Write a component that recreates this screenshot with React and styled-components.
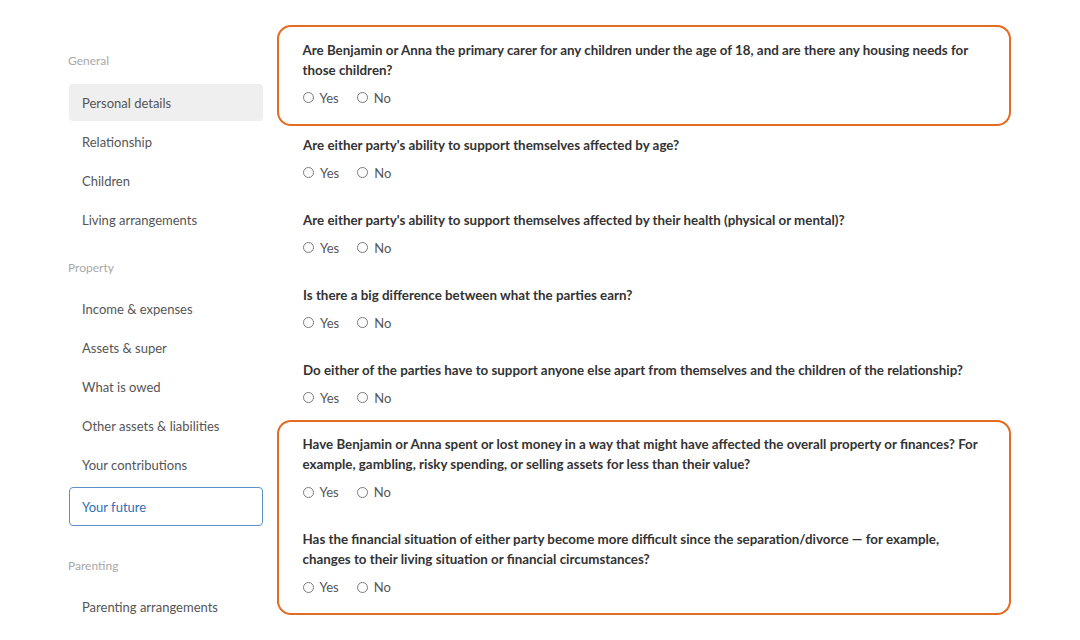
import React from "react";
import styled, { createGlobalStyle } from "styled-components";

const Global = createGlobalStyle`
  html, body { margin: 0; padding: 0; background: #ffffff; }
  body { font-family: Lato, "Noto Sans", sans-serif; }
  * { box-sizing: border-box; }
`;

const Page = styled.div`
  display: flex;
  align-items: flex-start;
  width: 1080px;
  height: 640px;
  overflow: hidden;
  background: #fff;
`;

const Sidebar = styled.nav`
  width: 194px;
  margin-left: 69px;
  padding-top: 53px;
  display: flex;
  flex-direction: column;
  flex-shrink: 0;
`;

const SectionHeader = styled.div`
  font-size: 12px;
  line-height: 16px;
  color: #a8a8a8;
  margin-left: -1px;
  margin-top: ${(p) => p.$top || 0}px;
  margin-bottom: ${(p) => (p.$top ? 14 : 15)}px;
`;

const NavItem = styled.div`
  height: 37px;
  display: flex;
  align-items: center;
  padding: 0 12px;
  margin-bottom: 2px;
  font-size: 13px;
  color: ${(p) => (p.$active ? "#2f6fb5" : "#555")};
  background: ${(p) => (p.$selected ? "#efefef" : "transparent")};
  border: 1px solid ${(p) => (p.$active ? "#5e8fc6" : "transparent")};
  border-radius: 4px;
  ${(p) => p.$active && "height: 39px; margin-top: 2px;"}
`;

const Main = styled.main`
  margin-left: 40px;
  width: 682px;
  padding-top: 40px;
  display: flex;
  flex-direction: column;
  gap: 27px;
`;

const Highlight = styled.div`
  margin: -15px -26px -18px;
  padding: 12.5px 23.5px 16px;
  border: 2.5px solid #e36b22;
  border-radius: 14px;
  display: flex;
  flex-direction: column;
  gap: 27px;
`;

const Question = styled.div`
  display: flex;
  flex-direction: column;
  gap: 8px;
`;

const QText = styled.div`
  font-size: 13.35px;
  line-height: 20px;
  font-weight: 700;
  color: #333;
`;

const Options = styled.div`
  display: flex;
  gap: 18px;
  height: 20px;
  align-items: center;
`;

const Option = styled.label`
  display: flex;
  align-items: center;
  gap: 6px;
  font-size: 13px;
  color: #555;
`;

const Circle = styled.span`
  width: 11px;
  height: 11px;
  border-radius: 50%;
  border: 1px solid #7a7a7a;
  background: #fff;
  display: inline-block;
`;

const QuestionBlock = ({ text }) => (
  <Question>
    <QText>{text}</QText>
    <Options>
      <Option><Circle />Yes</Option>
      <Option><Circle />No</Option>
    </Options>
  </Question>
);

export default function App() {
  return (
    <>
      <Global />
      <Page>
        <Sidebar>
          <SectionHeader>General</SectionHeader>
          <NavItem $selected>Personal details</NavItem>
          <NavItem>Relationship</NavItem>
          <NavItem>Children</NavItem>
          <NavItem>Living arrangements</NavItem>
          <SectionHeader $top={20}>Property</SectionHeader>
          <NavItem>Income &amp; expenses</NavItem>
          <NavItem>Assets &amp; super</NavItem>
          <NavItem>What is owed</NavItem>
          <NavItem>Other assets &amp; liabilities</NavItem>
          <NavItem>Your contributions</NavItem>
          <NavItem $active>Your future</NavItem>
          <SectionHeader $top={30}>Parenting</SectionHeader>
          <NavItem>Parenting arrangements</NavItem>
        </Sidebar>
        <Main>
          <Highlight>
            <QuestionBlock text="Are Benjamin or Anna the primary carer for any children under the age of 18, and are there any housing needs for those children?" />
          </Highlight>
          <QuestionBlock text="Are either party's ability to support themselves affected by age?" />
          <QuestionBlock text="Are either party's ability to support themselves affected by their health (physical or mental)?" />
          <QuestionBlock text="Is there a big difference between what the parties earn?" />
          <QuestionBlock text="Do either of the parties have to support anyone else apart from themselves and the children of the relationship?" />
          <Highlight>
            <QuestionBlock text="Have Benjamin or Anna spent or lost money in a way that might have affected the overall property or finances? For example, gambling, risky spending, or selling assets for less than their value?" />
            <QuestionBlock text="Has the financial situation of either party become more difficult since the separation/divorce — for example, changes to their living situation or financial circumstances?" />
          </Highlight>
        </Main>
      </Page>
    </>
  );
}
